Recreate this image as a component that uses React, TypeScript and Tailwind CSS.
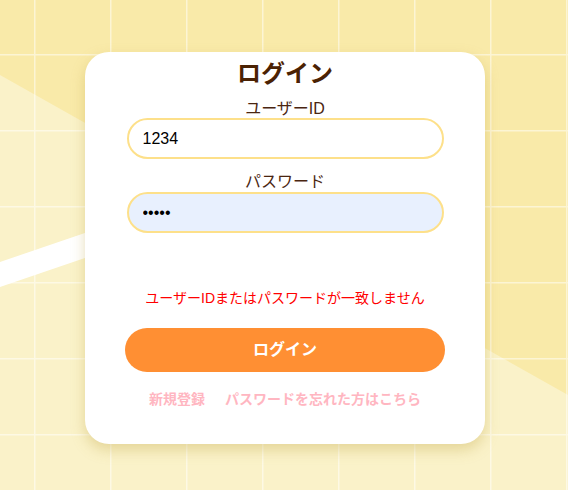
import React from 'react';

const font = { fontFamily: '"Liberation Sans", "Noto Sans CJK JP", sans-serif' };

const Background = () => (
    <svg className="absolute inset-0 h-full w-full" viewBox="0 0 568 490" preserveAspectRatio="none">
        <defs>
            <pattern id="grid" x="34" y="54" width="76" height="76" patternUnits="userSpaceOnUse">
                <path d="M0 0 H76 M0 0 V76" stroke="#ffffff" strokeOpacity="0.5" strokeWidth="3" fill="none" />
            </pattern>
        </defs>
        <rect width="568" height="490" fill="#f9eaa9" />
        <polygon points="0,75 568,395 568,490 0,490" fill="#faf2c9" />
        <polygon points="0,262 240,180 240,205 0,287" fill="#ffffff" />
        <rect width="568" height="490" fill="url(#grid)" />
    </svg>
);

export default function App() {
    return (
        <div className="relative min-h-[490px] w-full overflow-hidden" style={font}>
            <Background />
            <div className="relative mt-[52px] ml-[85px] flex h-[392px] w-[400px] flex-col items-center rounded-3xl bg-white pt-[6px] shadow-[0_6px_14px_rgba(190,160,60,0.35)]">
                <h1 className="text-[24px] leading-8 font-bold text-[#4b2203]">ログイン</h1>
                <label className="mt-[11px] text-[16px] leading-4 text-[#4a2510]">ユーザーID</label>
                <input
                    className="mt-px h-[41px] w-[317px] rounded-full border-2 border-[#fde08a] bg-white pl-[14px] text-[16px] text-black outline-none"
                    defaultValue="1234"
                />
                <label className="mt-[15px] text-[16px] leading-4 text-[#4a2510]">パスワード</label>
                <input
                    type="password"
                    className="mt-[2px] h-[41px] w-[317px] rounded-full border-2 border-[#fde08a] bg-[#e8f0fe] pl-[14px] text-[16px] text-black outline-none"
                    defaultValue="12345"
                />
                <p className="mt-[55px] text-[14px] leading-5 text-[#ff0000]">ユーザーIDまたはパスワードが一致しません</p>
                <button className="mt-5 h-11 w-[320px] rounded-full bg-[#ff8f33] text-[16px] font-bold text-white">ログイン</button>
                <div className="mt-[17px] flex gap-5 text-[14px] leading-5 font-bold text-[#ffb6c1]">
                    <a href="#">新規登録</a>
                    <a href="#">パスワードを忘れた方はこちら</a>
                </div>
            </div>
        </div>
    );
}
